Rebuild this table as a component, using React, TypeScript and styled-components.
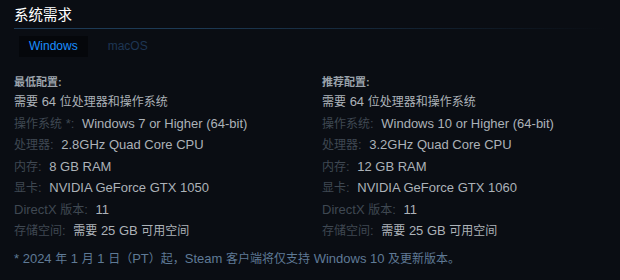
import React from 'react';
import styled, { createGlobalStyle } from 'styled-components';

const GlobalStyle = createGlobalStyle`
  html, body {
    margin: 0;
    padding: 0;
    background: #0a0d13;
  }
  body {
    font-family: 'Liberation Sans', Arial, 'Noto Sans CJK SC', sans-serif;
  }
`;

type Spec = { label: string; value: string };

const minimum: Spec[] = [
  { label: '操作系统 *:', value: 'Windows 7 or Higher (64-bit)' },
  { label: '处理器:', value: '2.8GHz Quad Core CPU' },
  { label: '内存:', value: '8 GB RAM' },
  { label: '显卡:', value: 'NVIDIA GeForce GTX 1050' },
  { label: 'DirectX 版本:', value: '11' },
  { label: '存储空间:', value: '需要 25 GB 可用空间' },
];

const recommended: Spec[] = [
  { label: '操作系统:', value: 'Windows 10 or Higher (64-bit)' },
  { label: '处理器:', value: '3.2GHz Quad Core CPU' },
  { label: '内存:', value: '12 GB RAM' },
  { label: '显卡:', value: 'NVIDIA GeForce GTX 1060' },
  { label: 'DirectX 版本:', value: '11' },
  { label: '存储空间:', value: '需要 25 GB 可用空间' },
];

// the Latin glyphs sit a size above the Han ones in the original font
const HAN = /([\u3000-\u303f\u4e00-\u9fff\uff00-\uffef]+)/;

function Mixed({ text }: { text: string }): JSX.Element {
  return (
    <>
      {text.split(HAN).map((part, i) =>
        i % 2 === 1 ? <Han key={i}>{part}</Han> : <React.Fragment key={i}>{part}</React.Fragment>,
      )}
    </>
  );
}

function Column({ title, specs }: { title: string; specs: Spec[] }): JSX.Element {
  return (
    <Col>
      <ColTitle>{title}</ColTitle>
      <Line>
        <Mixed text="需要 64 位处理器和操作系统" />
      </Line>
      {specs.map((s) => (
        <Line key={s.label}>
          <Label>
            <Mixed text={s.label} />
          </Label>{' '}
          <Mixed text={s.value} />
        </Line>
      ))}
    </Col>
  );
}

export default function App(): JSX.Element {
  return (
    <Page>
      <GlobalStyle />
      <Heading>系统需求</Heading>
      <Tabs>
        <Tab active>Windows</Tab>
        <Tab>macOS</Tab>
      </Tabs>
      <Columns>
        <Column title="最低配置:" specs={minimum} />
        <Column title="推荐配置:" specs={recommended} />
      </Columns>
      <Note>
        <Mixed text="* 2024 年 1 月 1 日（PT）起，Steam 客户端将仅支持 Windows 10 及更新版本。" />
      </Note>
    </Page>
  );
}

const Page = styled.div`
  width: 620px;
  height: 280px;
  box-sizing: border-box;
  padding: 6px 14px 0 14px;
  overflow: hidden;
`;

const Heading = styled.div`
  font-size: 14.5px;
  line-height: 19px;
  color: #ffffff;
  padding-bottom: 3px;
  border-bottom: 1px solid;
  border-image: linear-gradient(to right, #1d3a55 0%, #1d3a55 30%, rgba(29, 58, 85, 0) 100%) 1;
`;

const Tabs = styled.div`
  display: flex;
  margin: 7px 0 0 5px;
  gap: 10px;
`;

const Tab = styled.div<{ active?: boolean }>`
  height: 21px;
  line-height: 21px;
  padding: 0 10px;
  font-size: 12px;
  color: ${(p) => (p.active ? '#1a8fff' : '#1e3653')};
  background: ${(p) => (p.active ? '#05070b' : 'transparent')};
`;

const Columns = styled.div`
  display: grid;
  grid-template-columns: 308px 1fr;
  margin-top: 18px;
`;

const Col = styled.div`
  display: flex;
  flex-direction: column;
`;

const ColTitle = styled.div`
  font-size: 11px;
  font-weight: bold;
  line-height: 14px;
  color: #9ba3ab;
  margin-bottom: 2px;
`;

const Line = styled.div`
  font-size: 13px;
  line-height: 21.5px;
  height: 21.5px;
  color: #acb2b8;
`;

const Han = styled.span`
  font-size: 12px;
  line-height: 12px;
`;

const Label = styled.span`
  color: #3f4852;
  margin-right: 4px;
`;

const Note = styled.div`
  margin-top: 9px;
  font-size: 13px;
  line-height: 16px;
  height: 16px;
  color: #5f7a96;
`;
